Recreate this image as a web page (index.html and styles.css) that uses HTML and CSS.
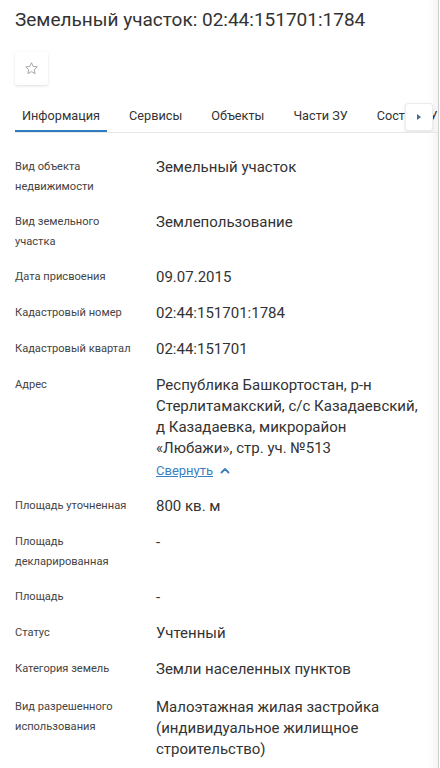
FILE: index.html
```html
<!DOCTYPE html>
<html lang="ru">
<head>
<meta charset="utf-8">
<title>Земельный участок</title>
<link rel="stylesheet" href="styles.css">
</head>
<body>
<div class="page">
  <header class="header">
    <h1 class="title">Земельный участок: 02:44:151701:1784</h1>
    <button class="star-btn" type="button" aria-label="В избранное">
      <svg width="15" height="15" viewBox="0 0 24 24"><path d="M12 2.8l2.75 5.9 6.45.75-4.78 4.4 1.3 6.37L12 17l-5.72 3.22 1.3-6.37L2.8 9.45l6.45-.75z" fill="none" stroke="#a0a0a0" stroke-width="1.5" stroke-linejoin="round"/></svg>
    </button>
  </header>

  <nav class="tabs-wrap">
    <ul class="tabs">
      <li class="tab active">Информация</li>
      <li class="tab">Сервисы</li>
      <li class="tab">Объекты</li>
      <li class="tab">Части ЗУ</li>
      <li class="tab">Состав ЗУ</li>
    </ul>
    <button class="tabs-next" type="button" aria-label="Далее">
      <svg width="6" height="8" viewBox="0 0 6 8"><path d="M1 1l4 3-4 3z" fill="#3f6d96"/></svg>
    </button>
  </nav>

  <dl class="info">
    <div class="row"><dt>Вид объекта недвижимости</dt><dd>Земельный участок</dd></div>
    <div class="row"><dt>Вид земельного участка</dt><dd>Землепользование</dd></div>
    <div class="row"><dt>Дата присвоения</dt><dd>09.07.2015</dd></div>
    <div class="row"><dt>Кадастровый номер</dt><dd>02:44:151701:1784</dd></div>
    <div class="row"><dt>Кадастровый квартал</dt><dd>02:44:151701</dd></div>
    <div class="row"><dt>Адрес</dt><dd><span class="addr">Республика Башкортостан, р-н<br>Стерлитамакский, с/с Казадаевский,<br>д Казадаевка, микрорайон<br>«Любажи», стр. уч. №513</span>
      <span class="collapse"><a class="link" href="#">Свернуть</a><svg class="chev" width="10" height="7" viewBox="0 0 10 7"><path d="M1.5 5.5L5 2l3.5 3.5" fill="none" stroke="#3a7fc0" stroke-width="1.8" stroke-linecap="round" stroke-linejoin="round"/></svg></span>
    </dd></div>
    <div class="row"><dt>Площадь уточненная</dt><dd>800 кв. м</dd></div>
    <div class="row"><dt>Площадь декларированная</dt><dd>-</dd></div>
    <div class="row"><dt>Площадь</dt><dd>-</dd></div>
    <div class="row"><dt>Статус</dt><dd>Учтенный</dd></div>
    <div class="row"><dt>Категория земель</dt><dd>Земли населенных пунктов</dd></div>
    <div class="row row-last"><dt>Вид разрешенного использования</dt><dd>Малоэтажная жилая застройка (индивидуальное жилищное строительство)</dd></div>
  </dl>
</div>
</body>
</html>
```

FILE: styles.css
```css
html, body {
  margin: 0;
  padding: 0;
  background: #fff;
  overflow: hidden;
}
body {
  font-family: Roboto, "Liberation Sans", sans-serif;
  color: #333;
}
.page {
  width: 439px;
  height: 768px;
  border-right: 1px solid #cfcfcf;
  box-shadow: inset -14px 0 12px -12px rgba(0,0,0,0.07);
  box-sizing: border-box;
  overflow: hidden;
}
.header {
  padding: 8px 15px 0;
}
.title {
  margin: 0;
  font-size: 19px;
  line-height: 24px;
  font-weight: 400;
  color: #333;
}
.star-btn {
  margin-top: 20px;
  width: 33px;
  height: 33px;
  padding: 0;
  border: none;
  background: #fff;
  border-radius: 2px;
  box-shadow: 0 1px 3px rgba(0,0,0,0.13);
  display: flex;
  align-items: center;
  justify-content: center;
}
.tabs-wrap {
  position: relative;
  margin: 15px 0 0 15px;
  border-bottom: 1px solid #e6e6e6;
  overflow: hidden;
}
.tabs {
  list-style: none;
  margin: 0;
  padding: 0;
  display: flex;
  gap: 15px;
  white-space: nowrap;
}
.tab {
  height: 30px;
  padding: 0 7px;
  display: flex;
  align-items: center;
  font-size: 12.7px;
  color: #333;
  border-bottom: 2px solid transparent;
}
.tab.active {
  border-bottom-color: #2f7cbf;
}
.tabs-next {
  position: absolute;
  right: 5px;
  top: 3px;
  width: 28px;
  height: 28px;
  padding: 0;
  border: 1px solid #ececec;
  border-radius: 3px;
  background: #fff;
  box-shadow: 0 1px 3px rgba(0,0,0,0.12);
  display: flex;
  align-items: center;
  justify-content: center;
}
.info {
  margin: 0;
  padding: 24px 10px 0 15px;
  display: flex;
  flex-direction: column;
  gap: 15px;
}
.row {
  display: grid;
  grid-template-columns: 141px 1fr;
}
.row-last {
  margin-top: 2px;
}
dt {
  font-size: 11.1px;
  line-height: 20px;
  color: #444;
  padding-right: 18px;
}
dd {
  margin: 0;
  font-size: 15px;
  line-height: 21px;
  color: #333;
}
.addr {
  display: block;
}
.collapse {
  display: flex;
  align-items: center;
  gap: 7px;
  height: 22px;
}
.link {
  font-size: 13px;
  color: #3a7fc0;
  text-decoration: underline;
}
.chev {
  display: block;
}
```
